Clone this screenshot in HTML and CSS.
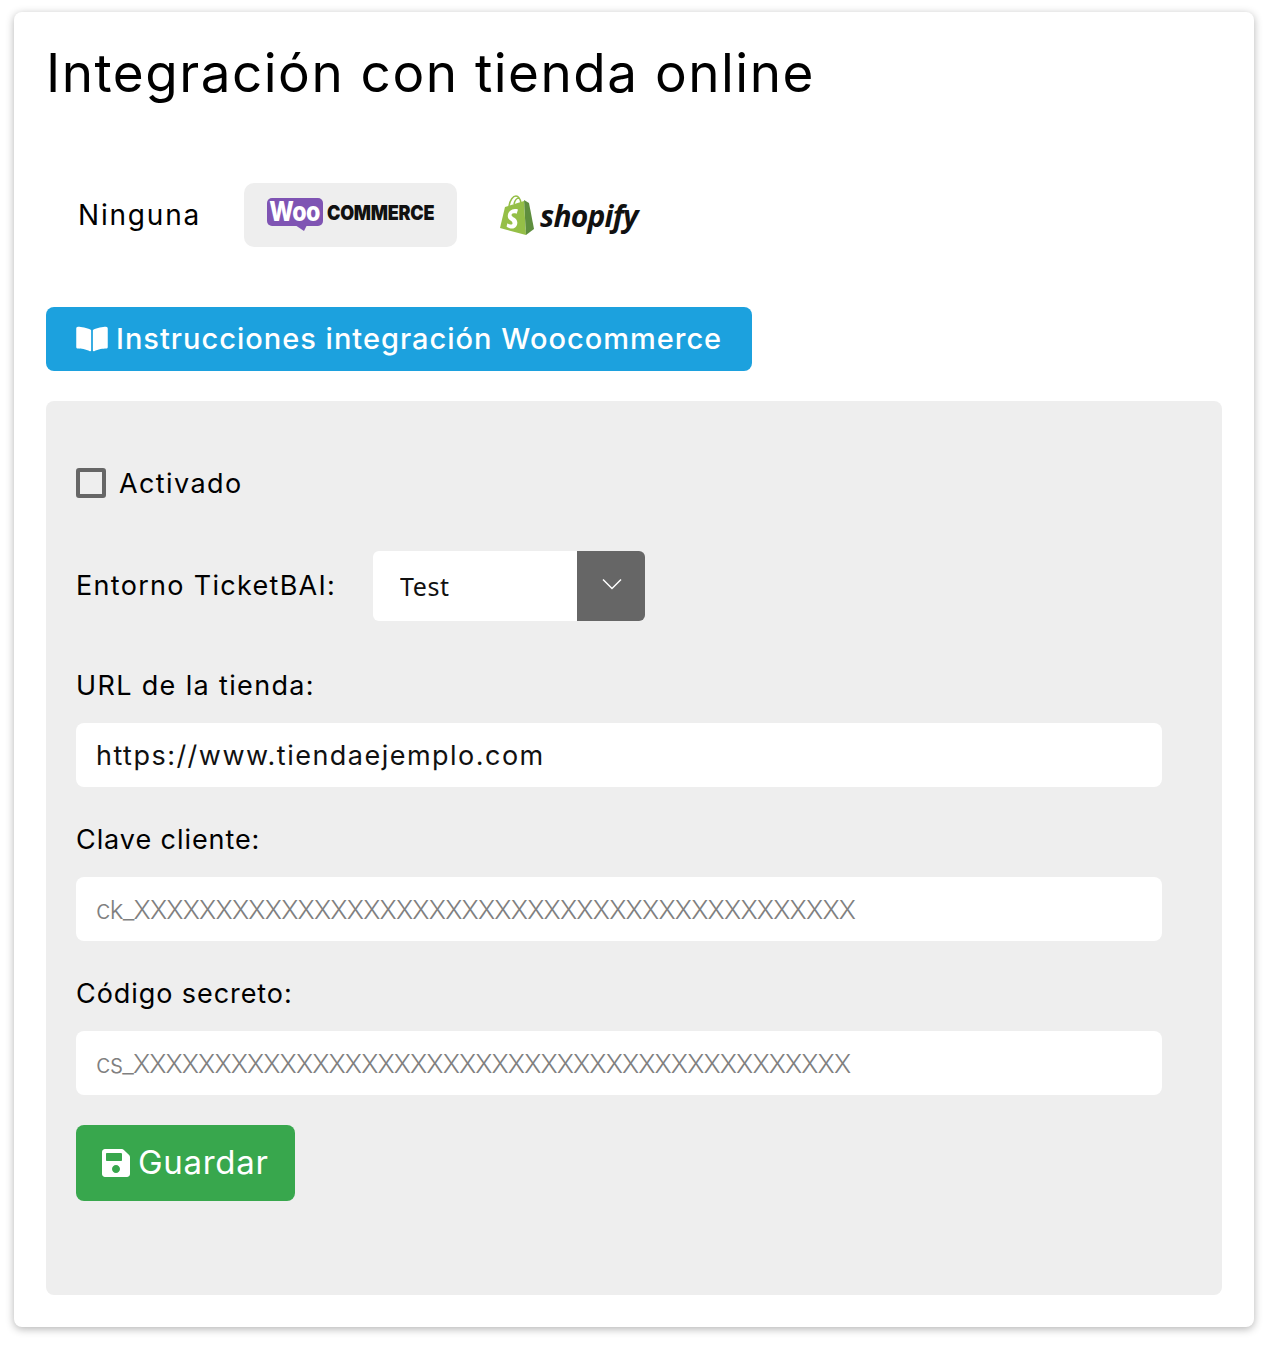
FILE: index.html
```html
<!DOCTYPE html>
<html lang="es">
<head>
  <meta charset="UTF-8">
  <meta name="viewport" content="width=device-width, initial-scale=1.0">
  <title>Integración con tienda online</title>
  <link rel="stylesheet" href="styles.css">
</head>
<body>
  <div class="card">
    <h1>Integración con tienda online</h1>

    <div class="tabs">
      <a class="tab tab-none">Ninguna</a>
      <a class="tab tab-active">
        <span class="woo-bubble"><span class="woo-word">Woo</span></span><span class="woo-text">COMMERCE</span>
      </a>
      <a class="tab tab-shopify">
        <svg class="shopify-bag" viewBox="0 0 34 40">
          <path d="M9 11C10 5 13 1 16 1c3 0 4 2 5 7M14 9c1-4 3-6 5-6" fill="none" stroke="#95bf47" stroke-width="1.500"/>
          <path fill="#95bf47" d="M5 12 24 6 26 40 0 33z"/>
          <path fill="#5e8e3e" d="M24 5 29 8 34 34 26 40z"/>
          <path fill="#fff" d="M18 14.500l-1.300 4.300s-1.300-.6-2.800-.5c-2.300.1-2.300 1.500-2.300 1.900.1 2 5.400 2.400 5.700 7 .2 3.600-1.900 6.100-5 6.300-3.700.2-5.700-2-5.700-2l.8-3.300s2 1.500 3.700 1.400c1.100-.1 1.500-1 1.400-1.600-.2-2.600-4.400-2.400-4.700-6.600-.2-3.500 2.100-7.100 7.200-7.400 2-.1 3 .5 3 .5z"/>
        </svg>
        <span class="shopify-text">shopify</span>
      </a>
    </div>

    <a class="btn btn-info">
      <svg class="icon-book" viewBox="0 0 576 512"><path fill="currentColor" d="M542.22 32.05c-54.8 3.11-163.72 14.43-230.96 55.59-4.64 2.84-7.27 7.89-7.27 13.17v363.87c0 11.55 12.63 18.85 23.28 13.49 69.18-34.82 169.23-44.32 218.7-46.92 16.89-.89 30.02-14.43 30.02-30.66V62.75c.01-17.71-15.35-31.74-33.77-30.7zM264.73 87.64C197.5 46.48 88.58 35.17 33.78 32.05 15.36 31.01 0 45.04 0 62.75V400.6c0 16.24 13.13 29.78 30.02 30.66 49.49 2.6 149.59 12.11 218.77 46.95 10.62 5.35 23.21-1.94 23.21-13.46V100.63c0-5.29-2.62-10.14-7.27-12.99z"/></svg>
      <span>Instrucciones integración Woocommerce</span>
    </a>

    <form class="panel" onsubmit="return false;">
      <label class="check-row">
        <input type="checkbox">
        <span>Activado</span>
      </label>

      <div class="env-row">
        <label for="entorno">Entorno TicketBAI:</label>
        <div class="select-wrap">
          <select id="entorno">
            <option>Test</option>
            <option>Producción</option>
          </select>
          <span class="select-arrow">
            <svg viewBox="0 0 20 12"><path d="M1 1.500 10 10.500 19 1.500" fill="none" stroke="#fff" stroke-width="1.500"/></svg>
          </span>
        </div>
      </div>

      <label class="field-label label-url" for="url">URL de la tienda:</label>
      <input class="field" id="url" type="text" value="https://www.tiendaejemplo.com">

      <label class="field-label" for="clave">Clave cliente:</label>
      <input class="field" id="clave" type="text" placeholder="ck_XXXXXXXXXXXXXXXXXXXXXXXXXXXXXXXXXXXXXXXXXXXX">

      <label class="field-label" for="secreto">Código secreto:</label>
      <input class="field field-secret" id="secreto" type="text" placeholder="cs_XXXXXXXXXXXXXXXXXXXXXXXXXXXXXXXXXXXXXXXXXXXX">

      <button class="btn btn-save" type="submit">
        <svg class="icon-save" viewBox="0 0 448 512"><path fill="currentColor" d="M433.941 129.941l-83.882-83.882A48 48 0 0 0 316.118 32H48C21.49 32 0 53.49 0 80v352c0 26.51 21.49 48 48 48h352c26.51 0 48-21.49 48-48V163.882a48 48 0 0 0-14.059-33.941zM224 416c-35.346 0-64-28.654-64-64 0-35.346 28.654-64 64-64s64 28.654 64 64c0 35.346-28.654 64-64 64zm96-304.52V212c0 6.627-5.373 12-12 12H76c-6.627 0-12-5.373-12-12V108c0-6.627 5.373-12 12-12h228.52c3.183 0 6.235 1.264 8.485 3.515l3.48 3.48A11.996 11.996 0 0 1 320 111.48z"/></svg>
        Guardar
      </button>
    </form>
  </div>
</body>
</html>
```

FILE: styles.css
```css
body {
  font-family: 'Inter', 'Liberation Sans', sans-serif;
  background: #fff;
  color: #000;
  margin: 0;
  padding: 12px 20px 19px 14px;
}
.card {
  background: white;
  border-radius: 8px;
  box-shadow: 0 2px 8px rgba(0, 0, 0, 0.3);
  padding: 0 32px 32px;
  height: 1315px;
  box-sizing: border-box;
}
h1 {
  font-size: 53px;
  font-weight: 400;
  line-height: 64px;
  margin: 0;
  padding-top: 29px;
  letter-spacing: 1.5px;
}
.tabs {
  display: flex;
  margin-top: 78px;
  height: 64px;
}
.tab {
  display: flex;
  align-items: center;
  border-radius: 10px;
  padding: 0 23px;
}
.tab-none {
  font-size: 28px;
  width: 198px;
  box-sizing: border-box;
  padding-left: 32px;
  letter-spacing: 1.8px;
}
.tab-active {
  background: #eee;
  width: 213px;
  box-sizing: border-box;
}
.woo-bubble {
  position: relative;
  display: flex;
  justify-content: center;
  width: 56px;
  height: 28px;
  flex: none;
  background: #7f54b3;
  color: #fff;
  border-radius: 5px;
  margin-bottom: 7px;
}
.woo-bubble::after {
  content: '';
  position: absolute;
  left: 28px;
  bottom: -5px;
  border-top: 6px solid #7f54b3;
  border-left: 9px solid transparent;
  border-right: 3px solid transparent;
}
.woo-word {
  font-weight: 800;
  font-size: 27px;
  line-height: 28px;
  letter-spacing: -0.5px;
  transform: scaleX(0.86);
}
.woo-text {
  font-weight: 900;
  font-size: 20px;
  margin-left: 4px;
  margin-bottom: 4px;
  letter-spacing: -0.3px;
  color: #111;
  transform: scaleX(0.9);
  transform-origin: left;
}
.tab-shopify {
  padding-left: 43px;
}
.shopify-bag {
  width: 34px;
  height: 40px;
}
.shopify-text {
  font-family: 'Open Sans', sans-serif;
  font-weight: 700;
  font-style: italic;
  font-size: 30px;
  letter-spacing: -0.8px;
  margin-left: 6px;
  color: #111;
}
.btn {
  display: inline-flex;
  align-items: center;
  color: white;
  border: none;
  border-radius: 8px;
  font-family: inherit;
}
.btn-info {
  background: #1ca1de;
  font-size: 29px;
  font-weight: 500;
  letter-spacing: 1px;
  height: 64px;
  width: 706px;
  box-sizing: border-box;
  padding-left: 30px;
  padding-bottom: 2px;
  margin-top: 60px;
}
.icon-book {
  width: 32px;
  height: 28px;
  margin-right: 8px;
  margin-top: 2px;
}
.panel {
  background: #eee;
  border-radius: 8px;
  margin-top: 30px;
  height: 894px;
  box-sizing: border-box;
  padding: 66px 30px 0;
  display: flex;
  flex-direction: column;
  align-items: flex-start;
}
.check-row {
  display: flex;
  align-items: center;
  font-size: 27px;
  letter-spacing: 1.4px;
  height: 32px;
}
.check-row input {
  appearance: none;
  width: 30px;
  height: 30px;
  margin: 0 13px 0 0;
  background: #eee;
  border: 4px solid #666;
  border-radius: 3px;
  box-sizing: border-box;
}
.env-row {
  display: flex;
  align-items: center;
  font-size: 27px;
  letter-spacing: 1.3px;
  margin-top: 52px;
}
.env-row label {
  width: 297px;
  padding-bottom: 2px;
}
.select-wrap {
  display: flex;
  width: 272px;
  height: 70px;
  border-radius: 6px;
  overflow: hidden;
}
.select-wrap select {
  appearance: none;
  border: none;
  outline: none;
  background: white;
  flex: 1;
  min-width: 0;
  padding: 0 26px 0 27px;
  font-family: 'Noto Sans', sans-serif;
  font-size: 25px;
  letter-spacing: 0.6px;
  color: #111;
}
.select-arrow {
  width: 68px;
  background: #666;
  display: flex;
  align-items: center;
  justify-content: center;
}
.select-arrow svg {
  width: 20px;
  height: 12px;
  margin-top: -4px;
  margin-left: 2px;
}
.field-label {
  font-size: 27px;
  letter-spacing: 0.93px;
  line-height: 34px;
  margin-top: 48px;
}
.label-url {
  letter-spacing: 1.35px;
}
.field {
  width: 1086px;
  height: 64px;
  box-sizing: border-box;
  border: none;
  border-radius: 8px;
  background: white;
  padding: 0 20px;
  margin-top: 20px;
  font-family: inherit;
  font-size: 27px;
  letter-spacing: 1.48px;
  color: #111;
  outline: none;
}
.field::placeholder {
  color: #808080;
  opacity: 1;
  font-size: 26px;
  font-weight: 300;
  letter-spacing: -0.8px;
}
.field-secret::placeholder {
  letter-spacing: -0.9px;
}
.field + .field-label {
  margin-top: 36px;
}
.btn-save {
  background: #38a74d;
  font-size: 33px;
  letter-spacing: 0.7px;
  height: 76px;
  width: 219px;
  box-sizing: border-box;
  padding: 0 0 2px 26px;
  margin-top: 30px;
}
.icon-save {
  width: 28px;
  height: 32px;
  margin-right: 8px;
  margin-top: 2px;
}
```
